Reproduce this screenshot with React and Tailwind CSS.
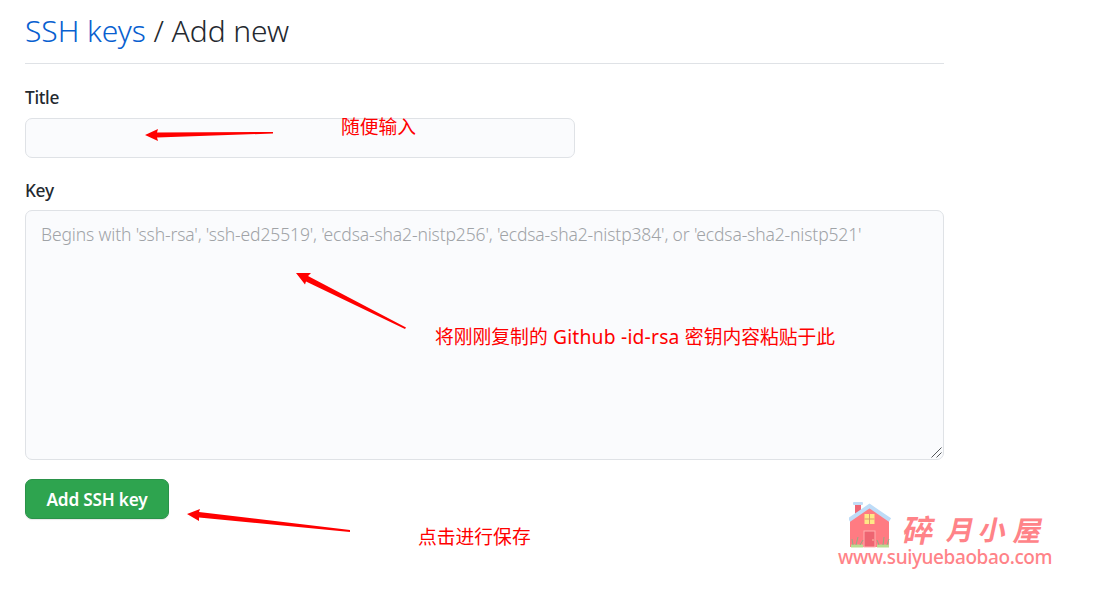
function Arrow({ points, className, width, height }) {
  return (
    <svg className={`pointer-events-none absolute ${className}`} width={width} height={height} viewBox={`0 0 ${width} ${height}`} fill="#f00" aria-hidden="true">
      <polygon points={points} />
    </svg>
  );
}

function Note({ className, children }) {
  return (
    <p className={`pointer-events-none absolute whitespace-nowrap text-[18.8px] leading-[26px] text-[#ff0000] ${className}`}>
      {children}
    </p>
  );
}

function House() {
  return (
    <svg className="shrink-0" width="44" height="48" viewBox="0 0 44 48" aria-hidden="true">
      <rect x="6" y="3" width="6" height="12" fill="#ee6674" />
      <rect x="4" y="1" width="10" height="3" rx="1" fill="#c1dcf5" />
      <path d="M1 18 21 5 40 18V46H1Z" fill="#ff7b82" />
      <path d="M0 19 20.500 5 41 19" fill="none" stroke="#bedcf7" strokeWidth="4" />
      <rect x="15.500" y="13" width="10" height="10" fill="#ffe886" />
      <path d="M20.500 13V23M15.500 18H25.500" stroke="#dc9a6f" strokeWidth="1" />
      <rect x="15" y="30" width="11" height="16" fill="#ee6471" stroke="#ffb0b0" strokeWidth="1" />
      <circle cx="24" cy="39" r=".7" fill="#ffe3b8" />
      <path d="M2 45H14M28 45H40" stroke="#b9dc91" strokeWidth="3" />
      <path d="M4 44 3 38M7 44 9 36M11 44 14 39M30 44 28 39M34 44 35 36M38 44 40 38" stroke="#93ad82" strokeWidth="1" />
    </svg>
  );
}

export default function App() {
  return (
    <main className="flex h-[600px] w-[1099px] flex-col overflow-hidden bg-white pl-[25px] pt-[9px] font-['Noto_Sans','Noto_Sans_CJK_SC',sans-serif] text-[#24292f]">
      <div className="w-[919px]">
        <h1 className="h-[55px] whitespace-nowrap border-b border-[#dfe2e6] text-[30px] font-light leading-[44px] tracking-[-0.06px]">
          <a className="text-[#0860d0]">SSH keys</a> / Add new
        </h1>
        <form className="flex flex-col gap-5 pt-[21px]" onSubmit={(e) => e.preventDefault()}>
          <div className="flex flex-col gap-[7px]">
            <label htmlFor="title" className="text-[17.3px] font-medium leading-[26px] tracking-[-0.3px]">Title</label>
            <div className="relative h-10 w-[550px]">
              <input id="title" className="block h-full w-full rounded-[7px] border border-[#dfe2e6] bg-[#fafbfd] px-4 outline-none" />
              <Arrow className="left-[120px] top-[10px]" width={128} height={14} points="0,7 13,1 12,4.500 128,4 128,5.500 12,9.500 13,13" />
              <Note className="left-[316px] top-[-4px]">随便输入</Note>
            </div>
          </div>
          <div className="flex flex-col gap-[6px]">
            <label htmlFor="key" className="text-[17.3px] font-medium leading-[26px] tracking-[-0.3px]">Key</label>
            <div className="relative h-[250px]">
              <textarea
                id="key"
                placeholder="Begins with 'ssh-rsa', 'ssh-ed25519', 'ecdsa-sha2-nistp256', 'ecdsa-sha2-nistp384', or 'ecdsa-sha2-nistp521'"
                className="block h-full w-full resize-none overflow-hidden rounded-[7px] border border-[#dfe2e6] bg-[#fafbfd] px-[15px] py-[10px] text-[17.5px] font-light leading-[26px] tracking-[-0.14px] outline-none placeholder:text-[#a0a3a7]"
              />
              <svg className="absolute bottom-[2px] right-[2px]" width="11" height="11" viewBox="0 0 11 11" stroke="#54575a" strokeWidth="1" aria-hidden="true">
                <path d="M.5 10.500 10.500.5M5.500 10.500 10.500 5.500" />
              </svg>
              <Arrow className="left-[271px] top-[62px]" width={111} height={58} points="0,1 15,1 12,4 110,55.500 109,57 10,9.500 9,12.500" />
              <Note className="left-[410px] top-[114px]">
                将刚刚复制的<span className="text-[19.3px] tracking-[0.2px]"> Github -id-rsa </span>密钥内容粘贴于此
              </Note>
            </div>
          </div>
          <div className="relative -mt-px">
            <button className="block h-10 w-36 rounded-[7px] border border-[#2a9249] bg-[#2ea44f] pt-px text-[17.2px] font-semibold tracking-[-0.2px] text-white shadow-[0_1px_1px_rgba(27,31,36,0.1)]">
              Add SSH key
            </button>
            <Arrow className="left-[162px] top-[29px]" width={164} height={26} points="0,6 13,1 12,4 163,22 163,24 12,9.500 12,13" />
            <Note className="left-[393px] top-[45px]">点击进行保存</Note>
          </div>
        </form>
      </div>

      <aside className="-mt-[18px] mr-[41px] flex w-[220px] shrink-0 flex-col self-end text-[#ff8388]">
        <div className="flex h-[44px] pl-[11px]">
          <House />
          <p className="ml-[12px] flex -skew-x-12 items-center pt-[14px] text-[31px] font-bold leading-[40px]">
            <span className="w-[39px]">碎</span>
            <span className="w-[37px] text-center text-[27px]">月</span>
            <span className="w-[35px] text-[27px]">小</span>
            <span className="text-[28px]">屋</span>
          </p>
        </div>
        <p className="whitespace-nowrap text-[19px] font-medium leading-[24px] tracking-[-0.4px]">www.suiyuebaobao.com</p>
      </aside>
    </main>
  );
}
